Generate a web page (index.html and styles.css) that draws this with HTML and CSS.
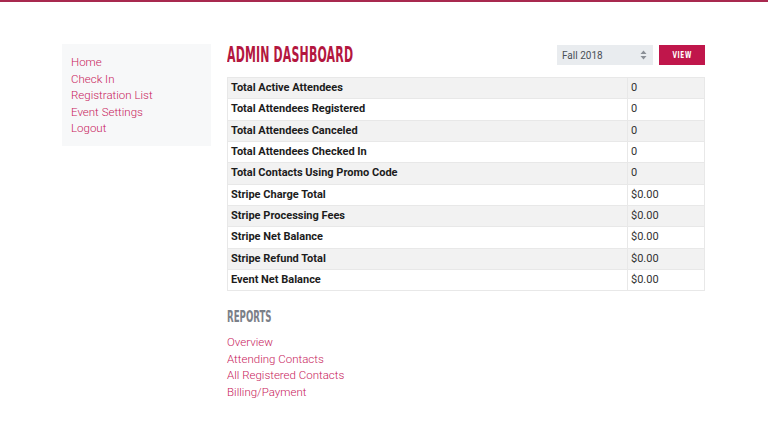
FILE: index.html
```html
<!DOCTYPE html>
<html>
<head>
<meta charset="utf-8">
<link rel="stylesheet" href="styles.css">
</head>
<body>
<div class="topbar"></div>
<div class="page">
  <nav class="sidebar">
    <a href="#">Home</a>
    <a href="#">Check In</a>
    <a href="#">Registration List</a>
    <a href="#">Event Settings</a>
    <a href="#">Logout</a>
  </nav>
  <main class="main">
    <div class="header">
      <h1 class="title"><span>ADMIN DASHBOARD</span></h1>
      <div class="controls">
        <div class="select">
          <span>Fall 2018</span>
          <svg class="caret" width="7" height="10" viewBox="0 0 7 10"><path d="M3.5 0.5 L6.5 4 L0.5 4 Z M3.5 9.5 L6.5 6 L0.5 6 Z" fill="#8a8f96"/></svg>
        </div>
        <button class="btn"><span>VIEW</span></button>
      </div>
    </div>
    <table class="stats">
      <tr><td class="label">Total Active Attendees</td><td class="val">0</td></tr>
      <tr><td class="label">Total Attendees Registered</td><td class="val">0</td></tr>
      <tr><td class="label">Total Attendees Canceled</td><td class="val">0</td></tr>
      <tr><td class="label">Total Attendees Checked In</td><td class="val">0</td></tr>
      <tr><td class="label">Total Contacts Using Promo Code</td><td class="val">0</td></tr>
      <tr><td class="label">Stripe Charge Total</td><td class="val">$0.00</td></tr>
      <tr><td class="label">Stripe Processing Fees</td><td class="val">$0.00</td></tr>
      <tr><td class="label">Stripe Net Balance</td><td class="val">$0.00</td></tr>
      <tr><td class="label">Stripe Refund Total</td><td class="val">$0.00</td></tr>
      <tr><td class="label">Event Net Balance</td><td class="val">$0.00</td></tr>
    </table>
    <h2 class="reports"><span>REPORTS</span></h2>
    <div class="report-links">
      <a href="#">Overview</a>
      <a href="#">Attending Contacts</a>
      <a href="#">All Registered Contacts</a>
      <a href="#">Billing/Payment</a>
    </div>
  </main>
</div>
</body>
</html>
```

FILE: styles.css
```css
* { box-sizing: border-box; }
html, body { margin: 0; padding: 0; background: #fff; }
body {
  font-family: Roboto, "Liberation Sans", sans-serif;
  font-size: 11px;
  color: #222;
  width: 768px;
  height: 432px;
  overflow: hidden;
}
.topbar {
  height: 2px;
  background: #a8294f;
}
.page {
  display: flex;
  gap: 16px;
  padding: 42px 0 0 62px;
  align-items: flex-start;
}
.sidebar {
  width: 149px;
  background: #f7f8f9;
  padding: 10px 9px 9px 9px;
  display: flex;
  flex-direction: column;
}
.sidebar a, .report-links a {
  color: #c8225c;
  text-decoration: none;
  font-size: 11.5px;
  line-height: 16.5px;
  font-weight: 300;
}
.main {
  width: 478px;
  margin-top: 1px;
  display: flex;
  flex-direction: column;
}
.header {
  display: flex;
  justify-content: space-between;
  align-items: center;
  height: 20px;
  margin-bottom: 12px;
}
.title {
  margin: 0;
  font-family: "DejaVu Sans Condensed", "DejaVu Sans", sans-serif;
  font-weight: bold;
  font-size: 21px;
  line-height: 20px;
  color: #b3173f;
  white-space: nowrap;
}
.title span {
  display: inline-block;
  transform: scaleX(0.58);
  transform-origin: left center;
  letter-spacing: 0.3px;
}
.controls {
  display: flex;
  gap: 6px;
  align-items: center;
}
.select {
  width: 96px;
  height: 20px;
  background: #e9ecef;
  display: flex;
  align-items: center;
  justify-content: space-between;
  padding: 0 6px 0 5px;
  font-size: 10px;
  color: #4a5057;
  font-weight: 400;
}
.btn {
  width: 46px;
  height: 20px;
  background: #c0164b;
  border: none;
  padding: 0;
  color: #fff;
  font-family: "DejaVu Sans Condensed", "DejaVu Sans", sans-serif;
  font-weight: bold;
  font-size: 8px;
  display: flex;
  align-items: center;
  justify-content: center;
}
.btn span {
  display: inline-block;
  transform: scaleX(0.8);
  letter-spacing: 0.8px;
}
.stats {
  width: 478px;
  border-collapse: collapse;
  border: 1px solid #e8e8e8;
}
.stats tr { height: 21.33px; }
.stats tr:nth-child(odd) { background: #f2f2f2; }
.stats td {
  padding: 0 3px;
  font-size: 11px;
  line-height: 14px;
  border-top: 1px solid #e8e8e8;
}
.stats td.label {
  font-weight: bold;
  color: #1c1c1c;
  width: 400px;
}
.stats td.val {
  border-left: 1px solid #e8e8e8;
  color: #333;
  font-weight: 400;
}
.reports {
  margin: 18px 0 0 0;
  font-family: "DejaVu Sans Condensed", "DejaVu Sans", sans-serif;
  font-weight: bold;
  font-size: 16px;
  line-height: 16px;
  color: #7b8088;
}
.reports span {
  display: inline-block;
  transform: scaleX(0.6);
  transform-origin: left center;
}
.report-links {
  margin-top: 9px;
  display: flex;
  flex-direction: column;
}
```
